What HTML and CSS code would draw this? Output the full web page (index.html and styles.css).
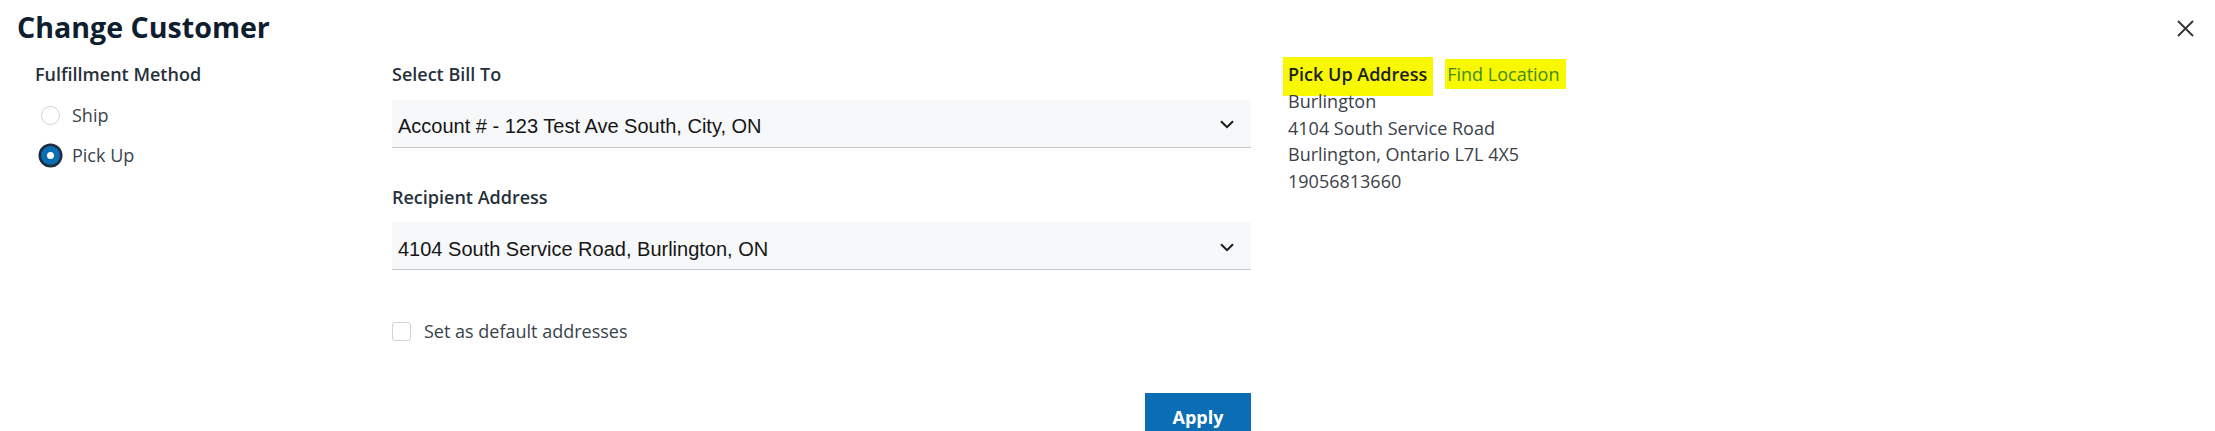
FILE: index.html
```html
<!DOCTYPE html>
<html lang="en">
<head>
<meta charset="utf-8">
<title>Change Customer</title>
<link rel="stylesheet" href="styles.css">
</head>
<body>
<div class="modal">
  <header class="modal-header">
    <h1 class="title">Change Customer</h1>
    <button class="close" aria-label="Close">
      <svg width="17" height="17" viewBox="0 0 17 17"><path d="M1 1L16 16M16 1L1 16" stroke="#333" stroke-width="1.8" fill="none"/></svg>
    </button>
  </header>
  <div class="content">
    <section class="col-method">
      <div class="label">Fulfillment Method</div>
      <div class="radios">
        <label class="radio-row"><span class="radio"></span><span class="radio-text">Ship</span></label>
        <label class="radio-row"><span class="radio checked"></span><span class="radio-text">Pick Up</span></label>
      </div>
    </section>
    <section class="col-main">
      <div class="field">
        <div class="label">Select Bill To</div>
        <div class="select">
          <span class="select-text">Account # - 123 Test Ave South, City, ON</span>
          <svg class="chev" width="14" height="9" viewBox="0 0 14 9"><path d="M1 1.2L7 7.2L13 1.2" stroke="#1a1a1a" stroke-width="2" fill="none"/></svg>
        </div>
      </div>
      <div class="field field-second">
        <div class="label">Recipient Address</div>
        <div class="select">
          <span class="select-text">4104 South Service Road, Burlington, ON</span>
          <svg class="chev" width="14" height="9" viewBox="0 0 14 9"><path d="M1 1.2L7 7.2L13 1.2" stroke="#1a1a1a" stroke-width="2" fill="none"/></svg>
        </div>
      </div>
      <label class="check-row"><span class="checkbox"></span><span class="check-text">Set as default addresses</span></label>
      <div class="actions"><button class="apply">Apply</button></div>
    </section>
    <section class="col-pickup">
      <div class="pickup-head"><span class="hl hl-title">Pick Up Address</span><span class="hl hl-link">Find Location</span></div>
      <div class="addr">Burlington</div>
      <div class="addr">4104 South Service Road</div>
      <div class="addr">Burlington, Ontario L7L 4X5</div>
      <div class="addr">19056813660</div>
    </section>
  </div>
</div>
</body>
</html>
```
FILE: styles.css
```css
* { box-sizing: border-box; }
html, body { margin: 0; padding: 0; background: #fff; }
body { font-family: "Open Sans", "Liberation Sans", sans-serif; font-size: 18px; color: #2b3640; }

.modal { width: 2215px; height: 431px; overflow: hidden; }

.modal-header {
  display: flex;
  justify-content: space-between;
  align-items: flex-start;
  padding: 7px 21px 0 17px;
}
.title {
  margin: 0;
  font-size: 28.6px;
  line-height: 40px;
  font-weight: 700;
  color: #0f1e2e;
}
.close {
  margin-top: 13px;
  padding: 0;
  border: 0;
  background: none;
  width: 17px;
  height: 17px;
  display: block;
}
.close svg { display: block; }

.content {
  display: flex;
  padding: 14px 0 0 35px;
  gap: 37px;
}
.label {
  font-weight: 600;
  line-height: 27px;
  color: #26313b;
}

.col-method { width: 320px; }
.radios { display: flex; flex-direction: column; gap: 13px; margin-top: 14px; }
.radio-row { display: flex; align-items: center; gap: 12px; padding-left: 6px; line-height: 27px; color: #39434c; }
.radio {
  width: 19px; height: 19px; border-radius: 50%;
  border: 1px solid #cfd3d6; background: #fff;
  flex: none;
}
.radio.checked {
  border: 6px solid #0b6db3;
  box-shadow: 0 0 0 2.5px #1c2d3d;
}

.col-main { width: 859px; display: flex; flex-direction: column; }
.field .label { margin-bottom: 11.5px; }
.field-second { margin-top: 36px; }
.select {
  height: 48px;
  background: #f6f8f9;
  border-bottom: 1.5px solid #c8cbce;
  display: flex;
  align-items: center;
  justify-content: space-between;
  padding: 0 17px 0 6px;
}
.select-text {
  font-family: "Liberation Sans", Arial, sans-serif;
  font-size: 20px;
  line-height: 24px;
  padding-top: 6px;
  color: #161616;
}
.chev { display: block; margin-top: 3px; }

.check-row { display: flex; align-items: center; gap: 13px; margin-top: 47.5px; line-height: 27px; color: #39434c; }
.checkbox { width: 19px; height: 19px; border: 1px solid #cfd3d6; border-radius: 3px; background: #fff; flex: none; }

.actions { display: flex; justify-content: flex-end; margin-top: 48.5px; }
.apply {
  font-family: "Open Sans", sans-serif;
  font-size: 18px;
  font-weight: 700;
  line-height: 27px;
  color: #fff;
  background: #0b6db3;
  border: 0;
  border-radius: 0;
  width: 106px;
  padding: 10.5px 0;
}

.col-pickup { flex: 1; }
.pickup-head { line-height: 27px; display: flex; gap: 20px; }
.hl { background: #f8f800; }
.hl-title {
  font-weight: 600; color: #1b1f22;
  padding: 4.5px 6px 7.5px 5px; margin: -4.5px -6px -7.5px -5px;
}
.hl-link {
  color: #3f8a1c;
  padding: 3px 6px 2px 2px; margin: -3px -6px -2px -2px;
  line-height: 25px;
  align-self: center;
}
.addr { line-height: 26.7px; color: #3a4148; }
```
